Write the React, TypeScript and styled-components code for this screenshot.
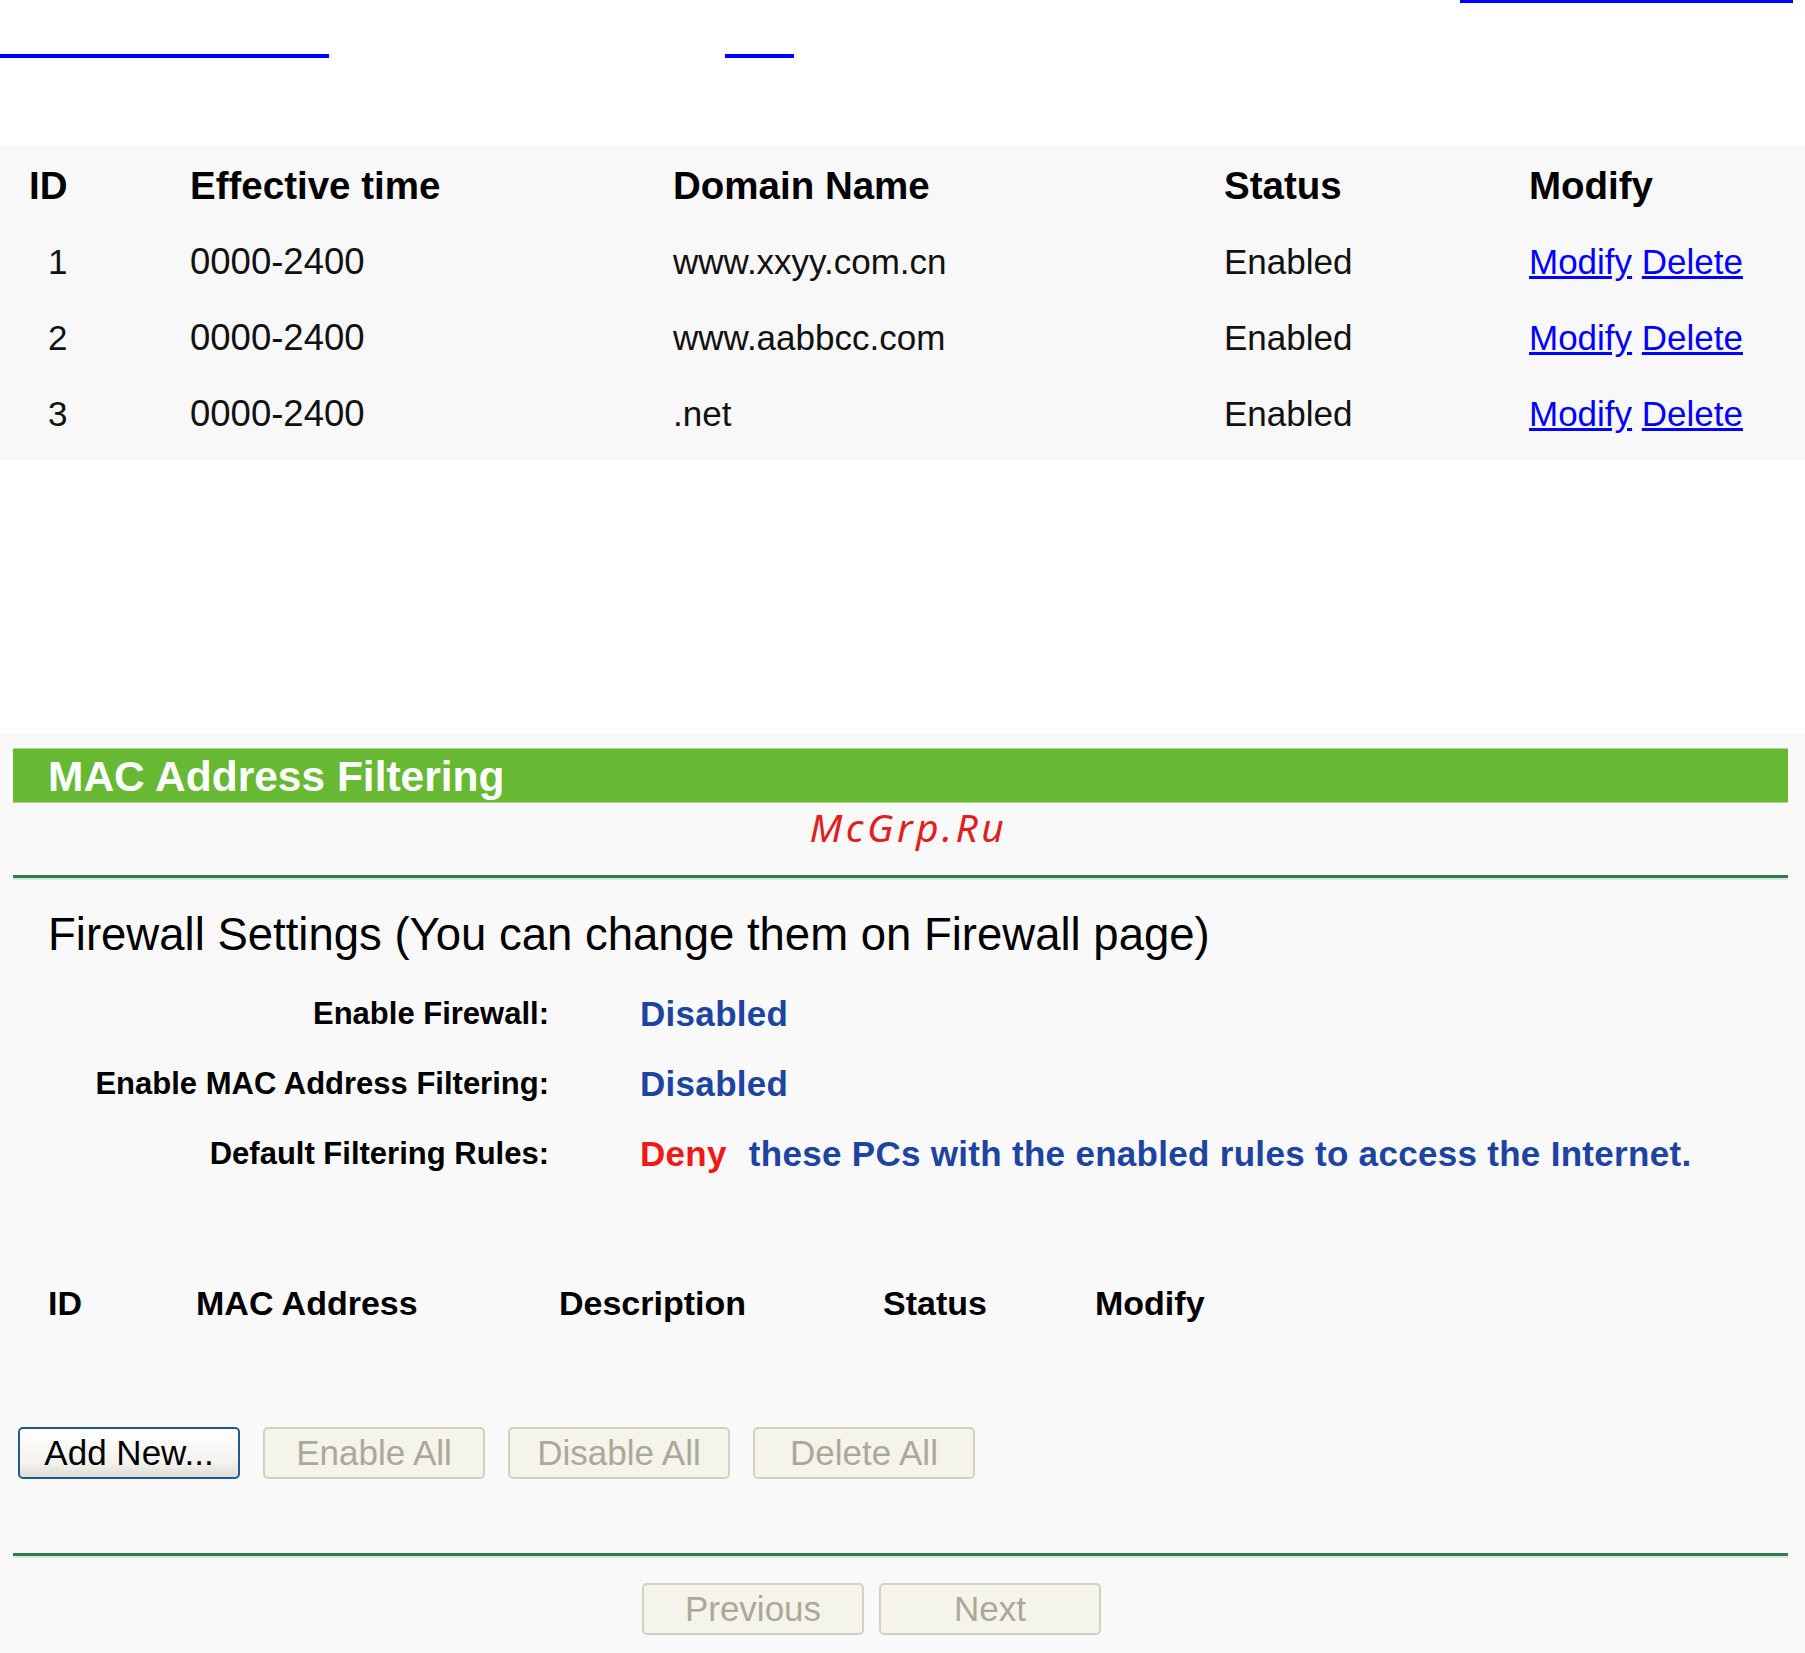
import React from "react";
import styled, { createGlobalStyle } from "styled-components";

const GlobalStyle = createGlobalStyle`
  html, body {
    margin: 0;
    padding: 0;
    background: #ffffff;
    font-family: "Liberation Sans", Arial, sans-serif;
    color: #000;
  }
`;

const dnsRules = [
  { id: 1, time: "0000-2400", domain: "www.xxyy.com.cn", status: "Enabled" },
  { id: 2, time: "0000-2400", domain: "www.aabbcc.com", status: "Enabled" },
  { id: 3, time: "0000-2400", domain: ".net", status: "Enabled" },
];

const leftButtons = [
  { label: "Add New...", enabled: true },
  { label: "Enable All", enabled: false },
  { label: "Disable All", enabled: false },
  { label: "Delete All", enabled: false },
];

export default function App() {
  return (
    <Page>
      <GlobalStyle />
      <ClippedLinks>
        <UnderlineRow $align="flex-end">
          <Underline $width={333} $thick={3} $mr={12} />
        </UnderlineRow>
        <UnderlineRow $align="flex-start" $mt={51}>
          <Underline $width={329} $thick={4} />
          <Underline $width={69} $thick={4} $ml={396} />
        </UnderlineRow>
      </ClippedLinks>

      <DnsTable>
        <DnsRow $header>
          <DnsHead>ID</DnsHead>
          <DnsHead>Effective time</DnsHead>
          <DnsHead>Domain Name</DnsHead>
          <DnsHead>Status</DnsHead>
          <DnsHead>Modify</DnsHead>
        </DnsRow>
        {dnsRules.map((r) => (
          <DnsRow key={r.id}>
            <DnsCell $id>{r.id}</DnsCell>
            <DnsCell $wide>{r.time}</DnsCell>
            <DnsCell>{r.domain}</DnsCell>
            <DnsCell>{r.status}</DnsCell>
            <DnsCell>
              <TableLink href="#">Modify</TableLink> <TableLink href="#">Delete</TableLink>
            </DnsCell>
          </DnsRow>
        ))}
      </DnsTable>

      <Panel>
        <TitleBar>MAC Address Filtering</TitleBar>
        <Watermark>McGrp.Ru</Watermark>
        <Divider />

        <Heading>Firewall Settings (You can change them on Firewall page)</Heading>

        <InfoGrid>
          <InfoLabel>Enable Firewall:</InfoLabel>
          <InfoValue>Disabled</InfoValue>
          <InfoLabel>Enable MAC Address Filtering:</InfoLabel>
          <InfoValue>Disabled</InfoValue>
          <InfoLabel>Default Filtering Rules:</InfoLabel>
          <InfoValue>
            <Deny>Deny</Deny>these PCs with the enabled rules to access the Internet.
          </InfoValue>
        </InfoGrid>

        <MacHeader>
          <span>ID</span>
          <span>MAC Address</span>
          <span>Description</span>
          <span>Status</span>
          <span>Modify</span>
        </MacHeader>

        <ButtonRow>
          {leftButtons.map((b) => (
            <FormButton key={b.label} $enabled={b.enabled} disabled={!b.enabled}>
              {b.label}
            </FormButton>
          ))}
        </ButtonRow>

        <Divider $mt={74} />

        <PagerRow>
          <FormButton disabled>Previous</FormButton>
          <FormButton disabled>Next</FormButton>
        </PagerRow>
      </Panel>
    </Page>
  );
}

const Page = styled.div`
  width: 1805px;
  min-height: 1653px;
  overflow: hidden;
`;

const ClippedLinks = styled.div`
  display: flex;
  flex-direction: column;
`;

const UnderlineRow = styled.div<{ $align: string; $mt?: number }>`
  display: flex;
  justify-content: ${(p) => p.$align};
  margin-top: ${(p) => p.$mt ?? 0}px;
`;

const Underline = styled.span<{ $width: number; $thick: number; $ml?: number; $mr?: number }>`
  display: block;
  width: ${(p) => p.$width}px;
  height: ${(p) => p.$thick}px;
  background: #0000ff;
  margin-left: ${(p) => p.$ml ?? 0}px;
  margin-right: ${(p) => p.$mr ?? 0}px;
`;

const DnsTable = styled.div`
  margin-top: 88px;
  background: #f8f8f8;
  padding: 2px 0 8px 29px;
`;

const DnsRow = styled.div<{ $header?: boolean }>`
  display: grid;
  grid-template-columns: 161px 483px 551px 305px 1fr;
  align-items: center;
  height: 76px;
`;

const DnsHead = styled.div`
  font-size: 38.5px;
  font-weight: bold;
  white-space: nowrap;
`;

const DnsCell = styled.div<{ $id?: boolean; $wide?: boolean }>`
  font-size: ${(p) => (p.$wide ? 36.5 : 35)}px;
  white-space: nowrap;
  color: #111;
  padding-left: ${(p) => (p.$id ? 19 : 0)}px;
`;

const TableLink = styled.a`
  color: #0000ff;
  text-decoration: underline;
`;

const Panel = styled.div`
  margin-top: 273px;
  background: #f9f9f9;
  padding: 15px 17px 40px 13px;
  display: flex;
  flex-direction: column;
`;

const TitleBar = styled.div`
  height: 55px;
  line-height: 55px;
  background: #67b934;
  border-top: 1px solid #a9d98a;
  border-bottom: 1px solid #a9d98a;
  box-sizing: border-box;
  color: #fff;
  font-size: 42.5px;
  font-weight: bold;
  padding-left: 35px;
  white-space: nowrap;
`;

const Watermark = styled.div`
  height: 47px;
  line-height: 47px;
  text-align: center;
  color: #e0201e;
  font-family: "Noto Sans", "Open Sans", sans-serif;
  font-style: italic;
  font-size: 39px;
  letter-spacing: 3.5px;
  padding-left: 16px;
`;

const Divider = styled.div<{ $mt?: number }>`
  margin-top: ${(p) => p.$mt ?? 25}px;
  height: 3px;
  background: #2f7d52;
  box-shadow: 0 2px 0 #d8e8dc;
`;

const Heading = styled.div`
  margin-top: 32px;
  padding-left: 35px;
  font-size: 45.5px;
  line-height: 50px;
  white-space: nowrap;
`;

const InfoGrid = styled.div`
  margin-top: 19px;
  display: grid;
  grid-template-columns: 536px 1fr;
  column-gap: 91px;
  grid-auto-rows: 70px;
  align-items: center;
`;

const InfoLabel = styled.div`
  text-align: right;
  font-size: 31px;
  font-weight: bold;
  white-space: nowrap;
`;

const InfoValue = styled.div`
  font-size: 35px;
  font-weight: bold;
  letter-spacing: 0.3px;
  color: #1d44a0;
  white-space: nowrap;
`;

const Deny = styled.span`
  color: #f01818;
  margin-right: 22px;
`;

const MacHeader = styled.div`
  margin-top: 89px;
  height: 50px;
  padding-left: 35px;
  display: grid;
  grid-template-columns: 148px 363px 324px 212px 1fr;
  align-items: center;
  font-size: 34px;
  font-weight: bold;
  white-space: nowrap;
`;

const ButtonRow = styled.div`
  margin-top: 99px;
  padding-left: 5px;
  display: flex;
  gap: 23px;
`;

const FormButton = styled.button<{ $enabled?: boolean }>`
  width: 222px;
  height: 52px;
  padding: 0;
  font-family: "Liberation Sans", Arial, sans-serif;
  font-size: 35px;
  border-radius: 5px;
  box-sizing: border-box;
  color: ${(p) => (p.$enabled ? "#000" : "#aca899")};
  border: ${(p) => (p.$enabled ? "2px solid #1f5a96" : "2px solid #d2d0c4")};
  background: ${(p) =>
    p.$enabled ? "linear-gradient(#ffffff, #f3f2ee 70%, #dedcd3)" : "#f5f4ea"};
`;

const PagerRow = styled.div`
  margin-top: 27px;
  padding-left: 629px;
  display: flex;
  gap: 15px;
`;
